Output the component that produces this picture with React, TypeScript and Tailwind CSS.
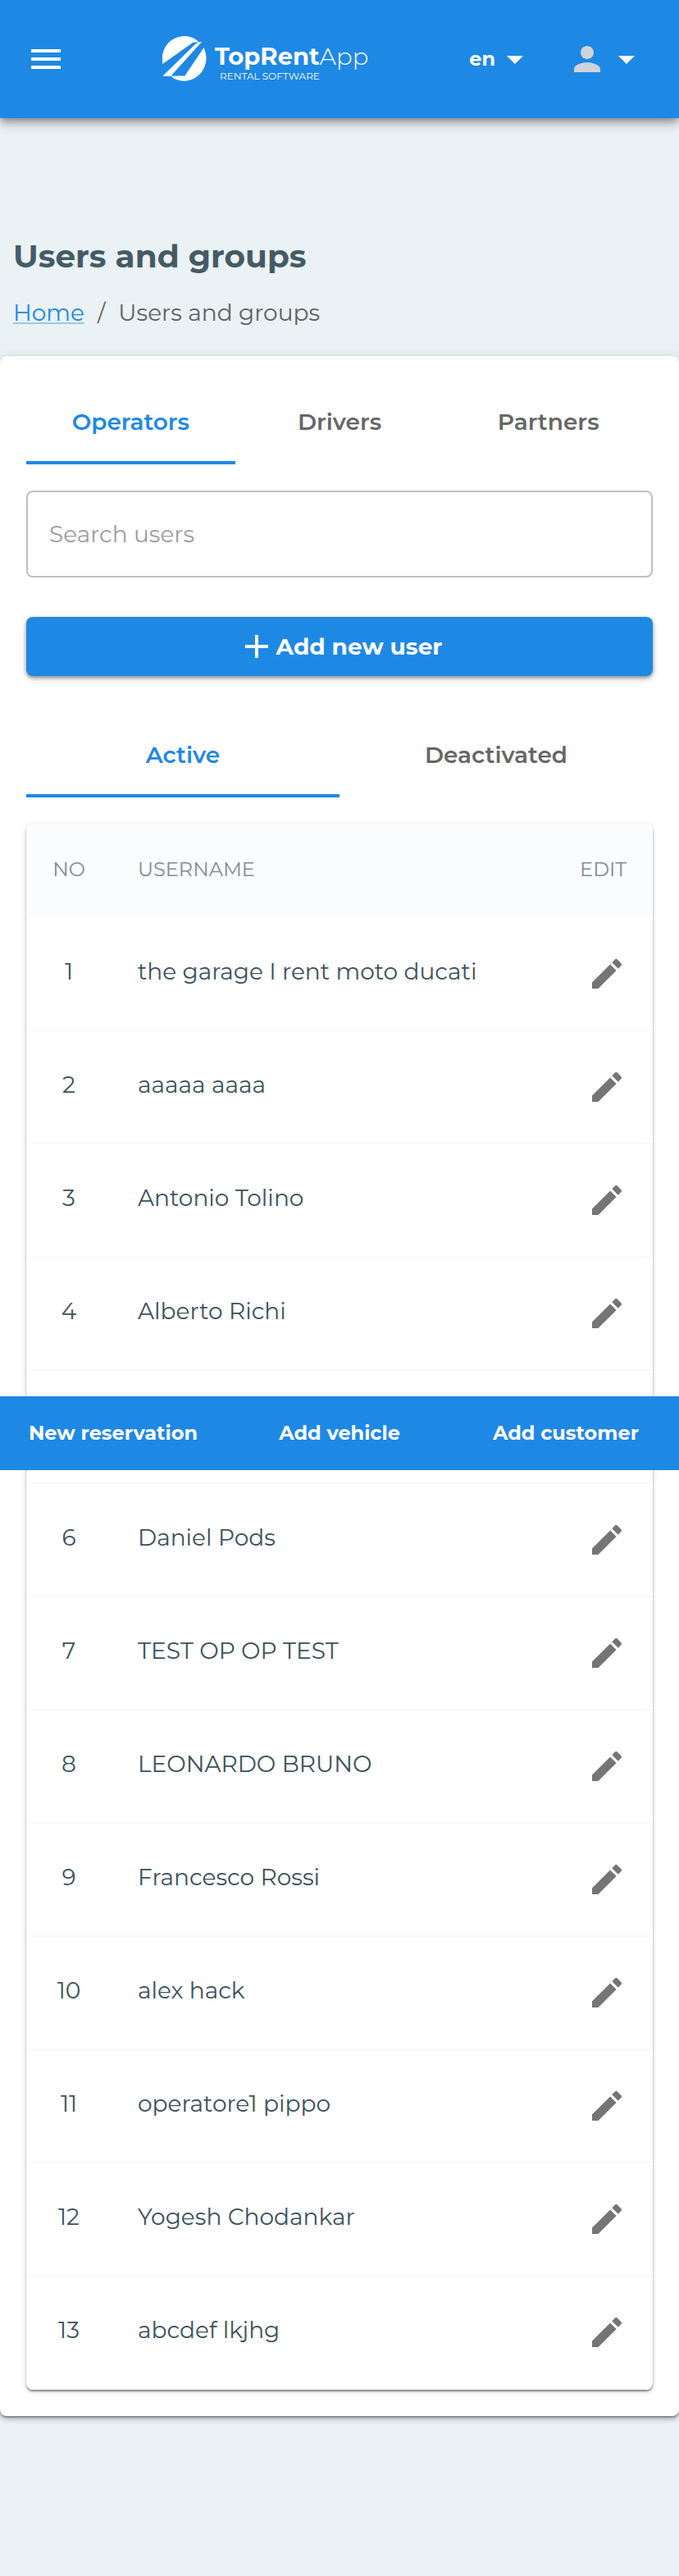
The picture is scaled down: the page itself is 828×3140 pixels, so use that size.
import { MdArrowDropDown, MdAdd, MdEdit, MdMenu, MdPerson } from "react-icons/md";

const users = [
  { no: "1", name: "the garage I rent moto ducati" },
  { no: "2", name: "aaaaa aaaa" },
  { no: "3", name: "Antonio Tolino" },
  { no: "4", name: "Alberto Richi" },
  { no: "", name: "" },
  { no: "6", name: "Daniel Pods" },
  { no: "7", name: "TEST OP OP TEST" },
  { no: "8", name: "LEONARDO BRUNO" },
  { no: "9", name: "Francesco Rossi" },
  { no: "10", name: "alex hack" },
  { no: "11", name: "operatore1 pippo" },
  { no: "12", name: "Yogesh Chodankar" },
  { no: "13", name: "abcdef lkjhg" },
];

function Logo() {
  return (
    <a href="#home" className="ml-[118px] flex items-center gap-[10px]">
      <svg viewBox="0 0 54 56" className="h-14 w-[54px]" aria-hidden="true">
        <path fill="#fff" d="M0.300 34A27 28 0 0 1 44 6.500L38 7.300Z" />
        <path fill="#fff" d="M38 7.200L48 7L10.500 48.500L27 48.600V49.300L0.300 48.700L40 10L44 7.600L38 8Z" />
        <path fill="#fff" d="M50.500 14A27 28 0 0 1 10.500 49.300L27 49Z" />
      </svg>
      <span className="flex flex-col pt-2.5 text-white">
        <span className="text-[29px] leading-8 font-bold">
          TopRent<span className="font-light">App</span>
        </span>
        <span className="pl-1.5 text-xs leading-4">RENTAL SOFTWARE</span>
      </span>
    </a>
  );
}

function Tabs({ label, items }: { label: string; items: string[] }) {
  return (
    <div role="tablist" aria-label={label} className="flex">
      {items.map((item, i) => (
        <button
          key={item}
          type="button"
          role="tab"
          aria-selected={i === 0}
          className={
            i === 0
              ? "h-[100px] flex-1 border-b-4 border-[#1e88e5] text-[28px] font-semibold text-[#1e88e5]"
              : "h-[100px] flex-1 border-b-4 border-transparent text-[28px] font-semibold text-[#666666]"
          }
        >
          {item}
        </button>
      ))}
    </div>
  );
}

export default function App() {
  return (
    <div className="relative min-h-screen bg-[#eaf2f5] font-['Montserrat','Inter',sans-serif] text-[28px]">
      <header className="relative flex h-36 items-center bg-[#1e88e5] pr-10 pl-8 shadow-[0_4px_8px_-2px_rgba(0,0,0,0.3),0_8px_10px_rgba(0,0,0,0.16),0_2px_20px_rgba(0,0,0,0.12)]">
        <button type="button" aria-label="Menu" className="text-white">
          <MdMenu size={48} />
        </button>
        <Logo />
        <div className="ml-auto flex items-center gap-10">
          <button type="button" className="flex items-center text-2xl font-bold text-white">
            en
            <MdArrowDropDown size={48} />
          </button>
          <button type="button" aria-label="Account" className="flex items-center text-white">
            <MdPerson size={48} className="text-[#cfd3dd]" />
            <MdArrowDropDown size={48} />
          </button>
        </div>
      </header>

      <div className="px-4 pt-36 pb-8">
        <h1 className="text-[39px] leading-[48px] font-bold text-[#455a64]">Users and groups</h1>
        <nav aria-label="Breadcrumb" className="mt-6 flex gap-4 leading-[42px] text-[#616161]">
          <a
            href="#home"
            className="text-[#1e88e5] underline decoration-[#1e88e5]/40 decoration-2 underline-offset-2"
          >
            Home
          </a>
          <span>/</span>
          <span>Users and groups</span>
        </nav>
      </div>

      <main className="rounded-lg bg-white p-8 shadow-[0_2px_2px_rgba(0,0,0,0.3),0_4px_6px_rgba(0,0,0,0.2),0_0_12px_rgba(0,0,0,0.1)]">
        <Tabs label="User type" items={["Operators", "Drivers", "Partners"]} />
        <input
          type="search"
          aria-label="Search users"
          placeholder="Search users"
          className="mt-8 block h-[106px] w-full rounded-lg border-2 border-[#c0c0c0] px-[26px] placeholder:text-[#9e9e9e]"
        />
        <button
          type="button"
          className="mt-12 flex h-[72px] w-full items-center justify-center rounded-lg bg-[#1e88e5] font-bold text-white shadow-[0_2px_4px_rgba(0,0,0,0.4),0_4px_10px_rgba(0,0,0,0.14)]"
        >
          <MdAdd size={48} />
          Add new user
        </button>
        <div className="mt-12">
          <Tabs label="User status" items={["Active", "Deactivated"]} />
        </div>
        <div className="mt-8 overflow-hidden rounded-lg shadow-[0_2px_2px_rgba(0,0,0,0.4),0_2px_6px_rgba(0,0,0,0.16)]">
          <table className="w-full border-collapse text-left">
            <thead className="bg-[#fafcfe] text-2xl text-[#7f8e94]">
              <tr className="h-[114px]">
                <th className="w-[104px] pb-0.5 text-center font-normal">NO</th>
                <th className="pb-0.5 pl-8 font-normal">USERNAME</th>
                <th className="pr-8 pb-0.5 text-right font-normal">EDIT</th>
              </tr>
            </thead>
            <tbody className="text-[#3d525c]">
              {users.map((user, i) => (
                <tr key={i} className="h-[138px] border-b-2 border-[#f5fafd]">
                  <td className="pb-1.5 text-center">{user.no}</td>
                  <td className="pb-1.5 pl-8">{user.name}</td>
                  <td className="pr-8">
                    <button type="button" aria-label={`Edit user ${i + 1}`} className="ml-auto block text-[#757575]">
                      <MdEdit size={48} />
                    </button>
                  </td>
                </tr>
              ))}
            </tbody>
          </table>
        </div>
      </main>

      <nav
        aria-label="Quick actions"
        className="absolute inset-x-0 top-[1702px] flex h-[90px] items-center bg-[#1e88e5] text-center text-2xl font-bold text-white"
      >
        <a href="#reservation" className="flex-1">New reservation</a>
        <a href="#vehicle" className="flex-1">Add vehicle</a>
        <a href="#customer" className="flex-1">Add customer</a>
      </nav>
    </div>
  );
}
